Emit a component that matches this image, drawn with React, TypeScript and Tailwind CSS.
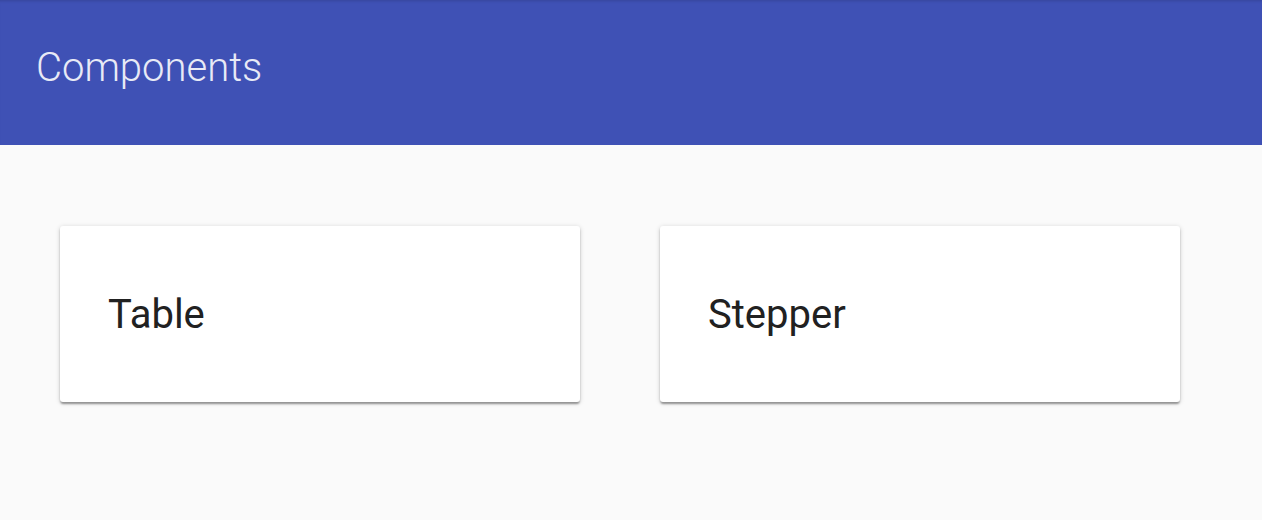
export default function App() {
  const items = ["Table", "Stepper"];

  return (
    <div className="min-h-[520px] bg-[#fafafa]" style={{ fontFamily: "Roboto, 'Liberation Sans', sans-serif" }}>
      {/* App bar */}
      <header className="h-[145px] bg-[#3f51b5] flex items-center px-9 shadow-[inset_0_3px_3px_-2px_rgba(0,0,0,0.15)]">
        <h1 className="text-[40px] font-light text-[#e8eaf6] leading-none pb-[10px]">Components</h1>
      </header>

      {/* Cards */}
      <main className="flex gap-20 px-[60px] pt-[81px]">
        {items.map((name) => (
          <div
            key={name}
            className="w-[520px] h-[176px] bg-white rounded-[3px] shadow-[0_1px_5px_rgba(0,0,0,0.18),0_2px_2px_rgba(0,0,0,0.2),0_3px_2px_-1px_rgba(0,0,0,0.18)] flex items-center px-12"
          >
            <span className="text-[40px] text-[#212121] leading-none pt-[2px]">{name}</span>
          </div>
        ))}
      </main>
    </div>
  );
}
